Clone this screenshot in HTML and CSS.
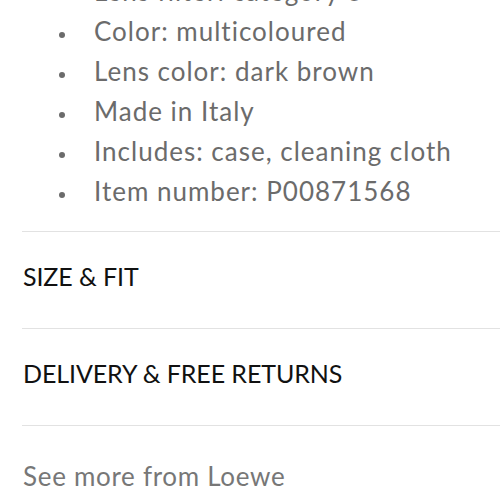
FILE: index.html
```html
<!DOCTYPE html>
<html>
<head>
<meta charset="utf-8">
<link rel="stylesheet" href="styles.css">
</head>
<body>
<div class="page">
  <ul class="details">
    <li>Lens filter: category 3</li>
    <li>Color: multicoloured</li>
    <li>Lens color: dark brown</li>
    <li>Made in Italy</li>
    <li>Includes: case, cleaning cloth</li>
    <li>Item number: P00871568</li>
  </ul>
  <div class="section">SIZE &amp; FIT</div>
  <div class="section">DELIVERY &amp; FREE RETURNS</div>
  <div class="more">See more from Loewe</div>
</div>
</body>
</html>
```
FILE: styles.css
```css
html, body {
  margin: 0;
  padding: 0;
  background: #fff;
  overflow: hidden;
}
.page {
  margin-left: 22px;
  font-family: Lato, "Open Sans", sans-serif;
}
.details {
  list-style: none;
  margin: -29px 0 20px 0;
  padding: 0;
}
.details li {
  position: relative;
  padding-left: 72px;
  font-size: 26px;
  line-height: 40px;
  color: #6b6b6b;
  letter-spacing: 1px;
}
.details li::before {
  content: "";
  position: absolute;
  left: 37px;
  top: 21px;
  width: 6px;
  height: 6px;
  border-radius: 50%;
  background: #6b6b6b;
}
.section {
  border-top: 1px solid #e2e2e2;
  padding: 29px 0 37px 1px;
  font-size: 25px;
  line-height: 30px;
  color: #111;
  letter-spacing: -0.1px;
}
.more {
  border-top: 1px solid #e2e2e2;
  padding: 30px 0 0 1px;
  font-size: 26px;
  line-height: 40px;
  color: #777;
  letter-spacing: 0.7px;
}
```
